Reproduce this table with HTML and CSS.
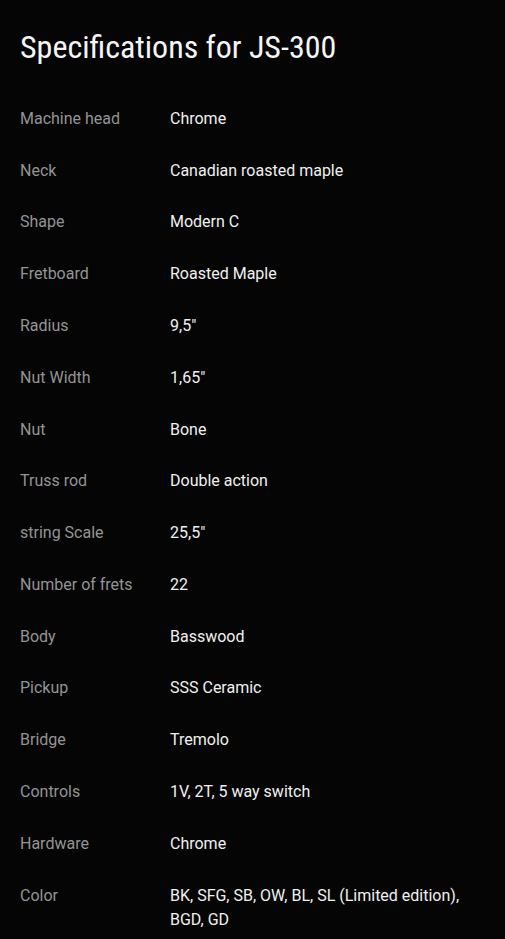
FILE: index.html
```html
<!DOCTYPE html>
<html>
<head>
<meta charset="UTF-8">
<meta name="viewport" content="width=device-width">
<title>Specifications for JS-300</title>
<link rel="stylesheet" href="styles.css">
</head>
<body>
<h1>Specifications for JS-300</h1>
<table class="specs">
    <tr><th>Machine head</th><td>Chrome</td></tr>
    <tr><th>Neck</th><td>Canadian roasted maple</td></tr>
    <tr><th>Shape</th><td>Modern C</td></tr>
    <tr><th>Fretboard</th><td>Roasted Maple</td></tr>
    <tr><th>Radius</th><td>9,5"</td></tr>
    <tr><th>Nut Width</th><td>1,65"</td></tr>
    <tr><th>Nut</th><td>Bone</td></tr>
    <tr><th>Truss rod</th><td>Double action</td></tr>
    <tr><th>string Scale</th><td>25,5"</td></tr>
    <tr><th>Number of frets</th><td>22</td></tr>
    <tr><th>Body</th><td>Basswood</td></tr>
    <tr><th>Pickup</th><td>SSS Ceramic</td></tr>
    <tr><th>Bridge</th><td>Tremolo</td></tr>
    <tr><th>Controls</th><td>1V, 2T, 5 way switch</td></tr>
    <tr><th>Hardware</th><td>Chrome</td></tr>
    <tr><th>Color</th><td>BK, SFG, SB, OW, BL, SL (Limited edition), BGD, GD</td></tr>
</table>
</body>
</html>
```

FILE: styles.css
```css
html, body {
    margin: 0;
    background-color: #050505;
    color: #eeeeee;
    font-family: Roboto, "Noto Sans", sans-serif;
}
body {
    padding: 26px 20px 0 20px;
}
h1 {
    margin: 0 0 25px 0;
    font-size: 32px;
    font-weight: 400;
    font-stretch: condensed;
    line-height: 42px;
    color: #f5f5f5;
}
.specs {
    border-collapse: collapse;
    width: 100%;
    font-size: 16px;
    line-height: 24px;
}
.specs th {
    width: 150px;
    padding: 13.9px 0;
    text-align: left;
    vertical-align: top;
    font-weight: 400;
    color: #949494;
}
.specs td {
    padding: 13.9px 0;
    vertical-align: top;
    color: #f0f0f0;
}
```
